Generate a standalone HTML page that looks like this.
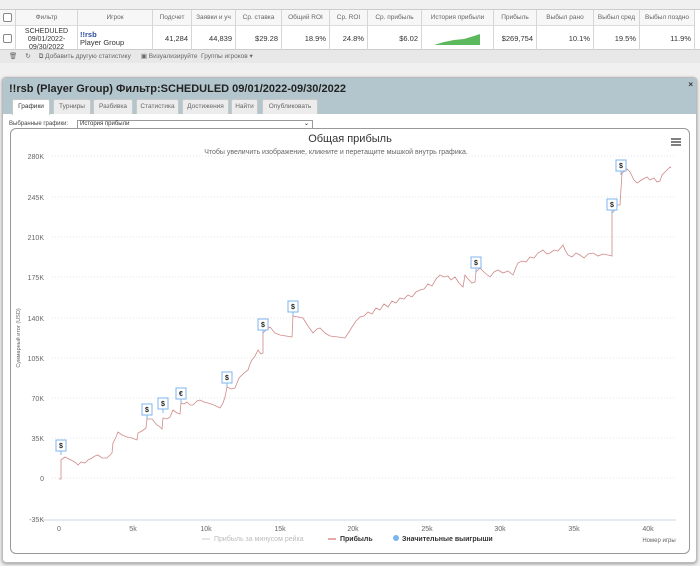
<!DOCTYPE html>
<html><head><meta charset="utf-8"><style>
*{box-sizing:border-box;margin:0;padding:0}
body{width:700px;height:566px;background:#f0f0f0;font-family:"Liberation Sans","DejaVu Sans",sans-serif;position:relative;overflow:hidden;font-size:7px;color:#444}
.tbl{position:absolute;left:0;top:9px;width:700px;height:41px;background:#fff;border-top:1px solid #ccc;border-bottom:1px solid #ccc}
.c{position:absolute;border-right:1px solid #d6d6d6;height:41px;top:0}
.h{position:absolute;top:0;height:16px;line-height:16px;background:#f7f7f7;border-bottom:1px solid #ddd;width:100%;text-align:center;color:#666;font-size:6.5px;white-space:nowrap;overflow:hidden}
.d{position:absolute;top:16px;height:25px;width:100%;font-size:7.5px;color:#333;text-align:right;padding-right:3px;line-height:25px}
.cb{position:absolute;left:3px;width:9px;height:9px;border:1px solid #888;border-radius:2px;background:#fff}
.tool{position:absolute;left:0;top:50px;width:700px;height:13px;background:#e8e8e8;font-size:6.5px;color:#666;line-height:13px}
.panel{position:absolute;left:2px;top:77px;width:695px;height:486px;background:#fff;border:1px solid #bbb;border-radius:4px;box-shadow:0 1px 3px #999;overflow:hidden}
.ph{height:36px;background:#b3c6cd}
.title{position:absolute;left:6px;top:5px;font-size:11px;font-weight:bold;color:#222}
.tab{position:absolute;top:21px;height:15px;background:#ececec;border:1px solid #c8c8c8;border-bottom:none;font-size:6.5px;color:#666;text-align:center;line-height:14px;border-radius:2px 2px 0 0}
.tab.a{background:#fff;height:16px;color:#333}
</style></head><body>
<div class="tbl">
 <div class="c" style="left:0;width:16px"><div class="h"></div><div class="cb" style="top:3px"></div><div class="cb" style="top:24px"></div></div>
 <div class="c" style="left:16px;width:62px"><div class="h">Фильтр</div><div class="d" style="text-align:center;line-height:8px;padding:2px 0 0;font-size:7px">SCHEDULED<br>09/01/2022-<br>09/30/2022</div></div>
 <div class="c" style="left:78px;width:75px"><div class="h">Игрок</div><div class="d" style="text-align:left;line-height:8px;padding:5px 0 0 2px"><b style="color:#2a4a9a">!!rsb</b><br>Player Group</div></div>
 <div class="c" style="left:153px;width:39px"><div class="h">Подсчет</div><div class="d">41,284</div></div>
 <div class="c" style="left:192px;width:44px"><div class="h">Заявки и уч</div><div class="d">44,839</div></div>
 <div class="c" style="left:236px;width:46px"><div class="h">Ср. ставка</div><div class="d">$29.28</div></div>
 <div class="c" style="left:282px;width:48px"><div class="h">Общий ROI</div><div class="d">18.9%</div></div>
 <div class="c" style="left:330px;width:38px"><div class="h">Ср. ROI</div><div class="d">24.8%</div></div>
 <div class="c" style="left:368px;width:54px"><div class="h">Ср. прибыль</div><div class="d">$6.02</div></div>
 <div class="c" style="left:422px;width:72px"><div class="h">История прибыли</div><div class="d"><svg style="position:absolute;left:12px;top:5px" width="48" height="14"><path d="M0 14 L10 11 L20 9 L30 8 L40 5 L46 3 L46 0 L46 14Z" fill="#5cb85c"/></svg></div></div>
 <div class="c" style="left:494px;width:43px"><div class="h">Прибыль</div><div class="d">$269,754</div></div>
 <div class="c" style="left:537px;width:57px"><div class="h">Выбыл рано</div><div class="d">10.1%</div></div>
 <div class="c" style="left:594px;width:46px"><div class="h">Выбыл сред</div><div class="d">19.5%</div></div>
 <div class="c" style="left:640px;width:55px"><div class="h">Выбыл поздно</div><div class="d">11.9%</div></div>
</div>
<div class="tool"><span style="margin-left:9px">🗑</span><span style="margin-left:8px">↻</span><span style="margin-left:8px">⧉ Добавить другую статистику</span><span style="margin-left:10px">▣ Визуализируйте&nbsp; Группы игроков ▾</span></div>
<div class="panel">
 <div class="ph"></div>
 <div class="title">!!rsb (Player Group) Фильтр:SCHEDULED 09/01/2022-09/30/2022</div>
 <div style="position:absolute;right:3px;top:2px;font-size:8px;font-weight:bold;color:#333">×</div>
 <div class="tab a" style="left:9px;width:38px">Графики</div>
 <div class="tab" style="left:50px;width:38px">Турниры</div>
 <div class="tab" style="left:90px;width:40px">Разбивка</div>
 <div class="tab" style="left:133px;width:43px">Статистика</div>
 <div class="tab" style="left:179px;width:47px">Достижения</div>
 <div class="tab" style="left:228px;width:27px">Найти</div>
 <div class="tab" style="left:259px;width:56px">Опубликовать</div>
 <div style="position:absolute;left:6px;top:43px;font-size:6px;color:#444">Выбранные графики:</div>
 <div style="position:absolute;left:74px;top:42px;width:236px;height:9px;border:1px solid #999;font-size:6px;line-height:7px;padding-left:2px;color:#333">История прибыли<span style="position:absolute;right:3px;font-weight:bold">⌄</span></div>
</div>
<div style="position:absolute;left:10px;top:128px;width:680px;height:426px;border:1px solid #999;border-radius:6px;background:#fff"></div>
<svg style="position:absolute;left:0;top:0" width="700" height="566" font-family="Liberation Sans, DejaVu Sans, sans-serif">
<text x="350" y="142" font-size="11" fill="#333" text-anchor="middle">Общая прибыль</text>
<text x="336" y="154" font-size="7" fill="#666" text-anchor="middle">Чтобы увеличить изображение, кликните и перетащите мышкой внутрь графика.</text>
<g stroke="#555" stroke-width="1.5"><line x1="671" y1="139" x2="681" y2="139"/><line x1="671" y1="142" x2="681" y2="142"/><line x1="671" y1="145" x2="681" y2="145"/></g>
<g stroke="#ddd" stroke-dasharray="1 2" stroke-width="0.8">
<line x1="52" x2="676" y1="156" y2="156"/><line x1="52" x2="676" y1="197" y2="197"/><line x1="52" x2="676" y1="237" y2="237"/><line x1="52" x2="676" y1="277" y2="277"/><line x1="52" x2="676" y1="318" y2="318"/><line x1="52" x2="676" y1="358" y2="358"/><line x1="52" x2="676" y1="398" y2="398"/><line x1="52" x2="676" y1="438" y2="438"/><line x1="52" x2="676" y1="478" y2="478"/></g>
<line x1="42" x2="676" y1="520" y2="520" stroke="#ccd6eb" stroke-width="1"/>
<g font-size="7" fill="#666" text-anchor="end">
<text x="44" y="159">280K</text><text x="44" y="200">245K</text><text x="44" y="240">210K</text><text x="44" y="280">175K</text><text x="44" y="321">140K</text><text x="44" y="361">105K</text><text x="44" y="401">70K</text><text x="44" y="441">35K</text><text x="44" y="481">0</text><text x="44" y="522">-35K</text></g>
<g font-size="7" fill="#666" text-anchor="middle">
<text x="59" y="531">0</text><text x="133" y="531">5k</text><text x="206" y="531">10k</text><text x="280" y="531">15k</text><text x="353" y="531">20k</text><text x="427" y="531">25k</text><text x="500" y="531">30k</text><text x="574" y="531">35k</text><text x="648" y="531">40k</text></g>
<text x="659" y="542" font-size="6" fill="#666" text-anchor="middle">Номер игры</text>
<text transform="translate(20,338) rotate(-90)" font-size="5.5" fill="#666" text-anchor="middle">Суммарный итог (USD)</text>
<polyline fill="none" stroke="#d08a8a" stroke-width="0.8" points="59,479 61,479 61,460 65,457 69,459 73,461 76,463 78,465 81,462 85,463 88,460 92,458 95,456 98,455 102,458 107,458 110,455 112,453 113,443 116,437 118,432 122,435 127,437 132,438 137,440 138,433 142,431 146,428 147,419 152,419 157,425 160,427 162,429 163,418 167,419 170,417 173,410 177,413 180,414 181,403 184,404 187,402 190,405 193,405 197,401 200,400 204,402 208,403 214,405 220,408 223,403 225,397 227,387 231,389 235,388 239,378 244,373 248,370 250,364 252,360 255,356 258,350 261,354 263,353 263,333 267,329 270,327 275,333 280,335 286,336 292,337 293,316 298,317 303,318 308,326 313,333 317,329 320,328 325,333 330,336 338,337 345,338 349,332 352,327 356,321 360,317 364,316 368,312 372,314 376,308 380,310 384,304 388,307 392,301 396,303 400,298 404,299 408,295 412,297 416,292 420,290 424,289 428,284 432,286 436,279 440,275 444,277 448,276 451,280 455,277 459,283 463,287 465,275 468,279 472,283 475,282 476,272 480,268 485,273 490,277 494,272 498,270 503,273 508,271 513,275 516,267 518,263 522,261 526,262 530,257 534,258 538,253 543,250 547,254 550,253 554,250 558,251 563,245 565,250 568,255 572,257 576,253 580,255 584,258 588,254 593,253 598,256 603,254 608,255 612,256 612,213 615,210 617,205 620,205 622,173 625,171 627,169 630,172 634,180 637,183 640,181 643,179 647,177 650,180 654,178 657,182 660,181 662,175 665,172 668,169 670,167 671,168"/>
<g fill="#fff" stroke="#7cb5ec" stroke-width="1" font-size="7" font-weight="bold">
<g transform="translate(61,455)"><line x1="0" y1="0" x2="0" y2="-4" /><rect x="-5" y="-15" width="10" height="11"/><text x="0" y="-7" text-anchor="middle" fill="#222" stroke="none">$</text></g>
<g transform="translate(147,419)"><line x1="0" y1="0" x2="0" y2="-4"/><rect x="-5" y="-15" width="10" height="11"/><text x="0" y="-7" text-anchor="middle" fill="#222" stroke="none">$</text></g>
<g transform="translate(163,413)"><line x1="0" y1="0" x2="0" y2="-4"/><rect x="-5" y="-15" width="10" height="11"/><text x="0" y="-7" text-anchor="middle" fill="#222" stroke="none">$</text></g>
<g transform="translate(181,403)"><line x1="0" y1="0" x2="0" y2="-4"/><rect x="-5" y="-15" width="10" height="11"/><text x="0" y="-7" text-anchor="middle" fill="#222" stroke="none">€</text></g>
<g transform="translate(227,387)"><line x1="0" y1="0" x2="0" y2="-4"/><rect x="-5" y="-15" width="10" height="11"/><text x="0" y="-7" text-anchor="middle" fill="#222" stroke="none">$</text></g>
<g transform="translate(263,334)"><line x1="0" y1="0" x2="0" y2="-4"/><rect x="-5" y="-15" width="10" height="11"/><text x="0" y="-7" text-anchor="middle" fill="#222" stroke="none">$</text></g>
<g transform="translate(293,316)"><line x1="0" y1="0" x2="0" y2="-4"/><rect x="-5" y="-15" width="10" height="11"/><text x="0" y="-7" text-anchor="middle" fill="#222" stroke="none">$</text></g>
<g transform="translate(476,272)"><line x1="0" y1="0" x2="0" y2="-4"/><rect x="-5" y="-15" width="10" height="11"/><text x="0" y="-7" text-anchor="middle" fill="#222" stroke="none">$</text></g>
<g transform="translate(612,214)"><line x1="0" y1="0" x2="0" y2="-4"/><rect x="-5" y="-15" width="10" height="11"/><text x="0" y="-7" text-anchor="middle" fill="#222" stroke="none">$</text></g>
<g transform="translate(621,175)"><line x1="0" y1="0" x2="0" y2="-4"/><rect x="-5" y="-15" width="10" height="11"/><text x="0" y="-7" text-anchor="middle" fill="#222" stroke="none">$</text></g>
</g>
<line x1="202" x2="210" y1="539" y2="539" stroke="#ddd" stroke-width="1.5"/>
<text x="214" y="541" font-size="7" fill="#bbb">Прибыль за минусом рейка</text>
<line x1="328" x2="336" y1="539" y2="539" stroke="#e08c8c" stroke-width="1.5"/>
<text x="340" y="541" font-size="7" fill="#333" font-weight="bold">Прибыль</text>
<circle cx="396" cy="538" r="3" fill="#7cb5ec"/>
<text x="402" y="541" font-size="7" fill="#333" font-weight="bold">Значительные выигрыши</text>
</svg>
</body></html>
